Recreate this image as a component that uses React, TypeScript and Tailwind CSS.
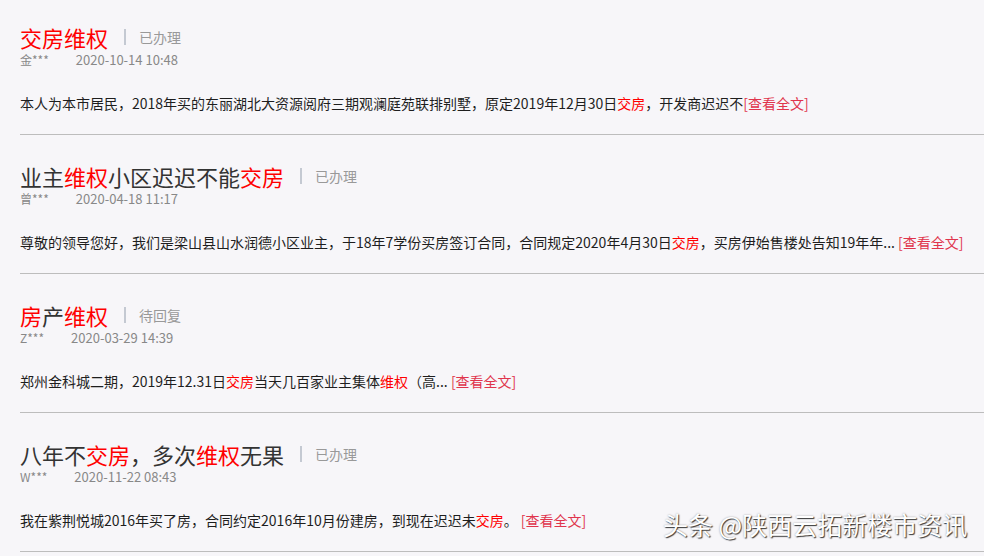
import React from "react";

type Seg = { t: string; red?: boolean };

const R = ({ children }: { children: React.ReactNode }) => (
  <span className="text-[#ff0000]">{children}</span>
);

const Item = ({
  title,
  status,
  name,
  date,
  body,
  first,
}: {
  title: Seg[];
  status: string;
  name: string;
  date: string;
  body: React.ReactNode;
  first?: boolean;
}) => (
  <div
    className={`ml-[20px] border-b border-[#bdbdbd] pb-[21px] ${
      first ? "pt-[22px]" : "pt-[26px]"
    }`}
  >
    <div className="flex items-center h-[30px]">
      <span className="text-[22px] leading-[30px] text-[#333333]">
        {title.map((s, i) =>
          s.red ? (
            <span key={i} className="text-[#ff0000]">
              {s.t}
            </span>
          ) : (
            <span key={i}>{s.t}</span>
          )
        )}
      </span>
      <span className="ml-[16px] w-[2px] h-[16px] bg-[#c4c9d2]" />
      <span className="ml-[13px] text-[14px] text-[#999999] leading-[30px]">
        {status}
      </span>
    </div>
    <div className="flex h-[16px] items-center leading-[16px] text-[#888888]">
      <span className="text-[12px]">{name}</span>
      <span className="ml-[27px] text-[13px]">{date}</span>
    </div>
    <div className="mt-[25px] text-[14px] leading-[20px] text-[#1e1e1e] whitespace-nowrap">
      {body}
    </div>
  </div>
);

const More = () => <span className="text-[#e0344c]">[查看全文]</span>;

export default function App() {
  return (
    <div
      className="relative w-[984px] h-[556px] overflow-hidden bg-[#f7f6f9]"
      style={{ fontFamily: '"Noto Sans CJK SC", "Noto Sans", sans-serif' }}
    >
      <Item
        first
        title={[{ t: "交房维权", red: true }]}
        status="已办理"
        name="金***"
        date="2020-10-14 10:48"
        body={
          <>
            本人为本市居民，2018年买的东丽湖北大资源阅府三期观澜庭苑联排别墅，原定2019年12月30日
            <R>交房</R>，开发商迟迟不
            <More />
          </>
        }
      />
      <Item
        title={[
          { t: "业主" },
          { t: "维权", red: true },
          { t: "小区迟迟不能" },
          { t: "交房", red: true },
        ]}
        status="已办理"
        name="曾***"
        date="2020-04-18 11:17"
        body={
          <>
            尊敬的领导您好，我们是梁山县山水润德小区业主，于18年7学份买房签订合同，合同规定2020年4月30日
            <R>交房</R>，买房伊始售楼处告知19年年... <More />
          </>
        }
      />
      <Item
        title={[
          { t: "房", red: true },
          { t: "产" },
          { t: "维权", red: true },
        ]}
        status="待回复"
        name="Z***"
        date="2020-03-29 14:39"
        body={
          <>
            郑州金科城二期，2019年12.31日<R>交房</R>当天几百家业主集体
            <R>维权</R>（高... <More />
          </>
        }
      />
      <Item
        title={[
          { t: "八年不" },
          { t: "交房", red: true },
          { t: "，多次" },
          { t: "维权", red: true },
          { t: "无果" },
        ]}
        status="已办理"
        name="W***"
        date="2020-11-22 08:43"
        body={
          <>
            我在紫荆悦城2016年买了房，合同约定2016年10月份建房，到现在迟迟未
            <R>交房</R>。 <More />
          </>
        }
      />
      <div
        className="absolute left-[663px] top-[507px] text-[25px] leading-[34px] text-white whitespace-nowrap"
        style={{ textShadow: "1px 1px 1px rgba(0,0,0,0.75), 0 0 2px rgba(0,0,0,0.35)" }}
      >
        头条 @陕西云拓新楼市资讯
      </div>
    </div>
  );
}
